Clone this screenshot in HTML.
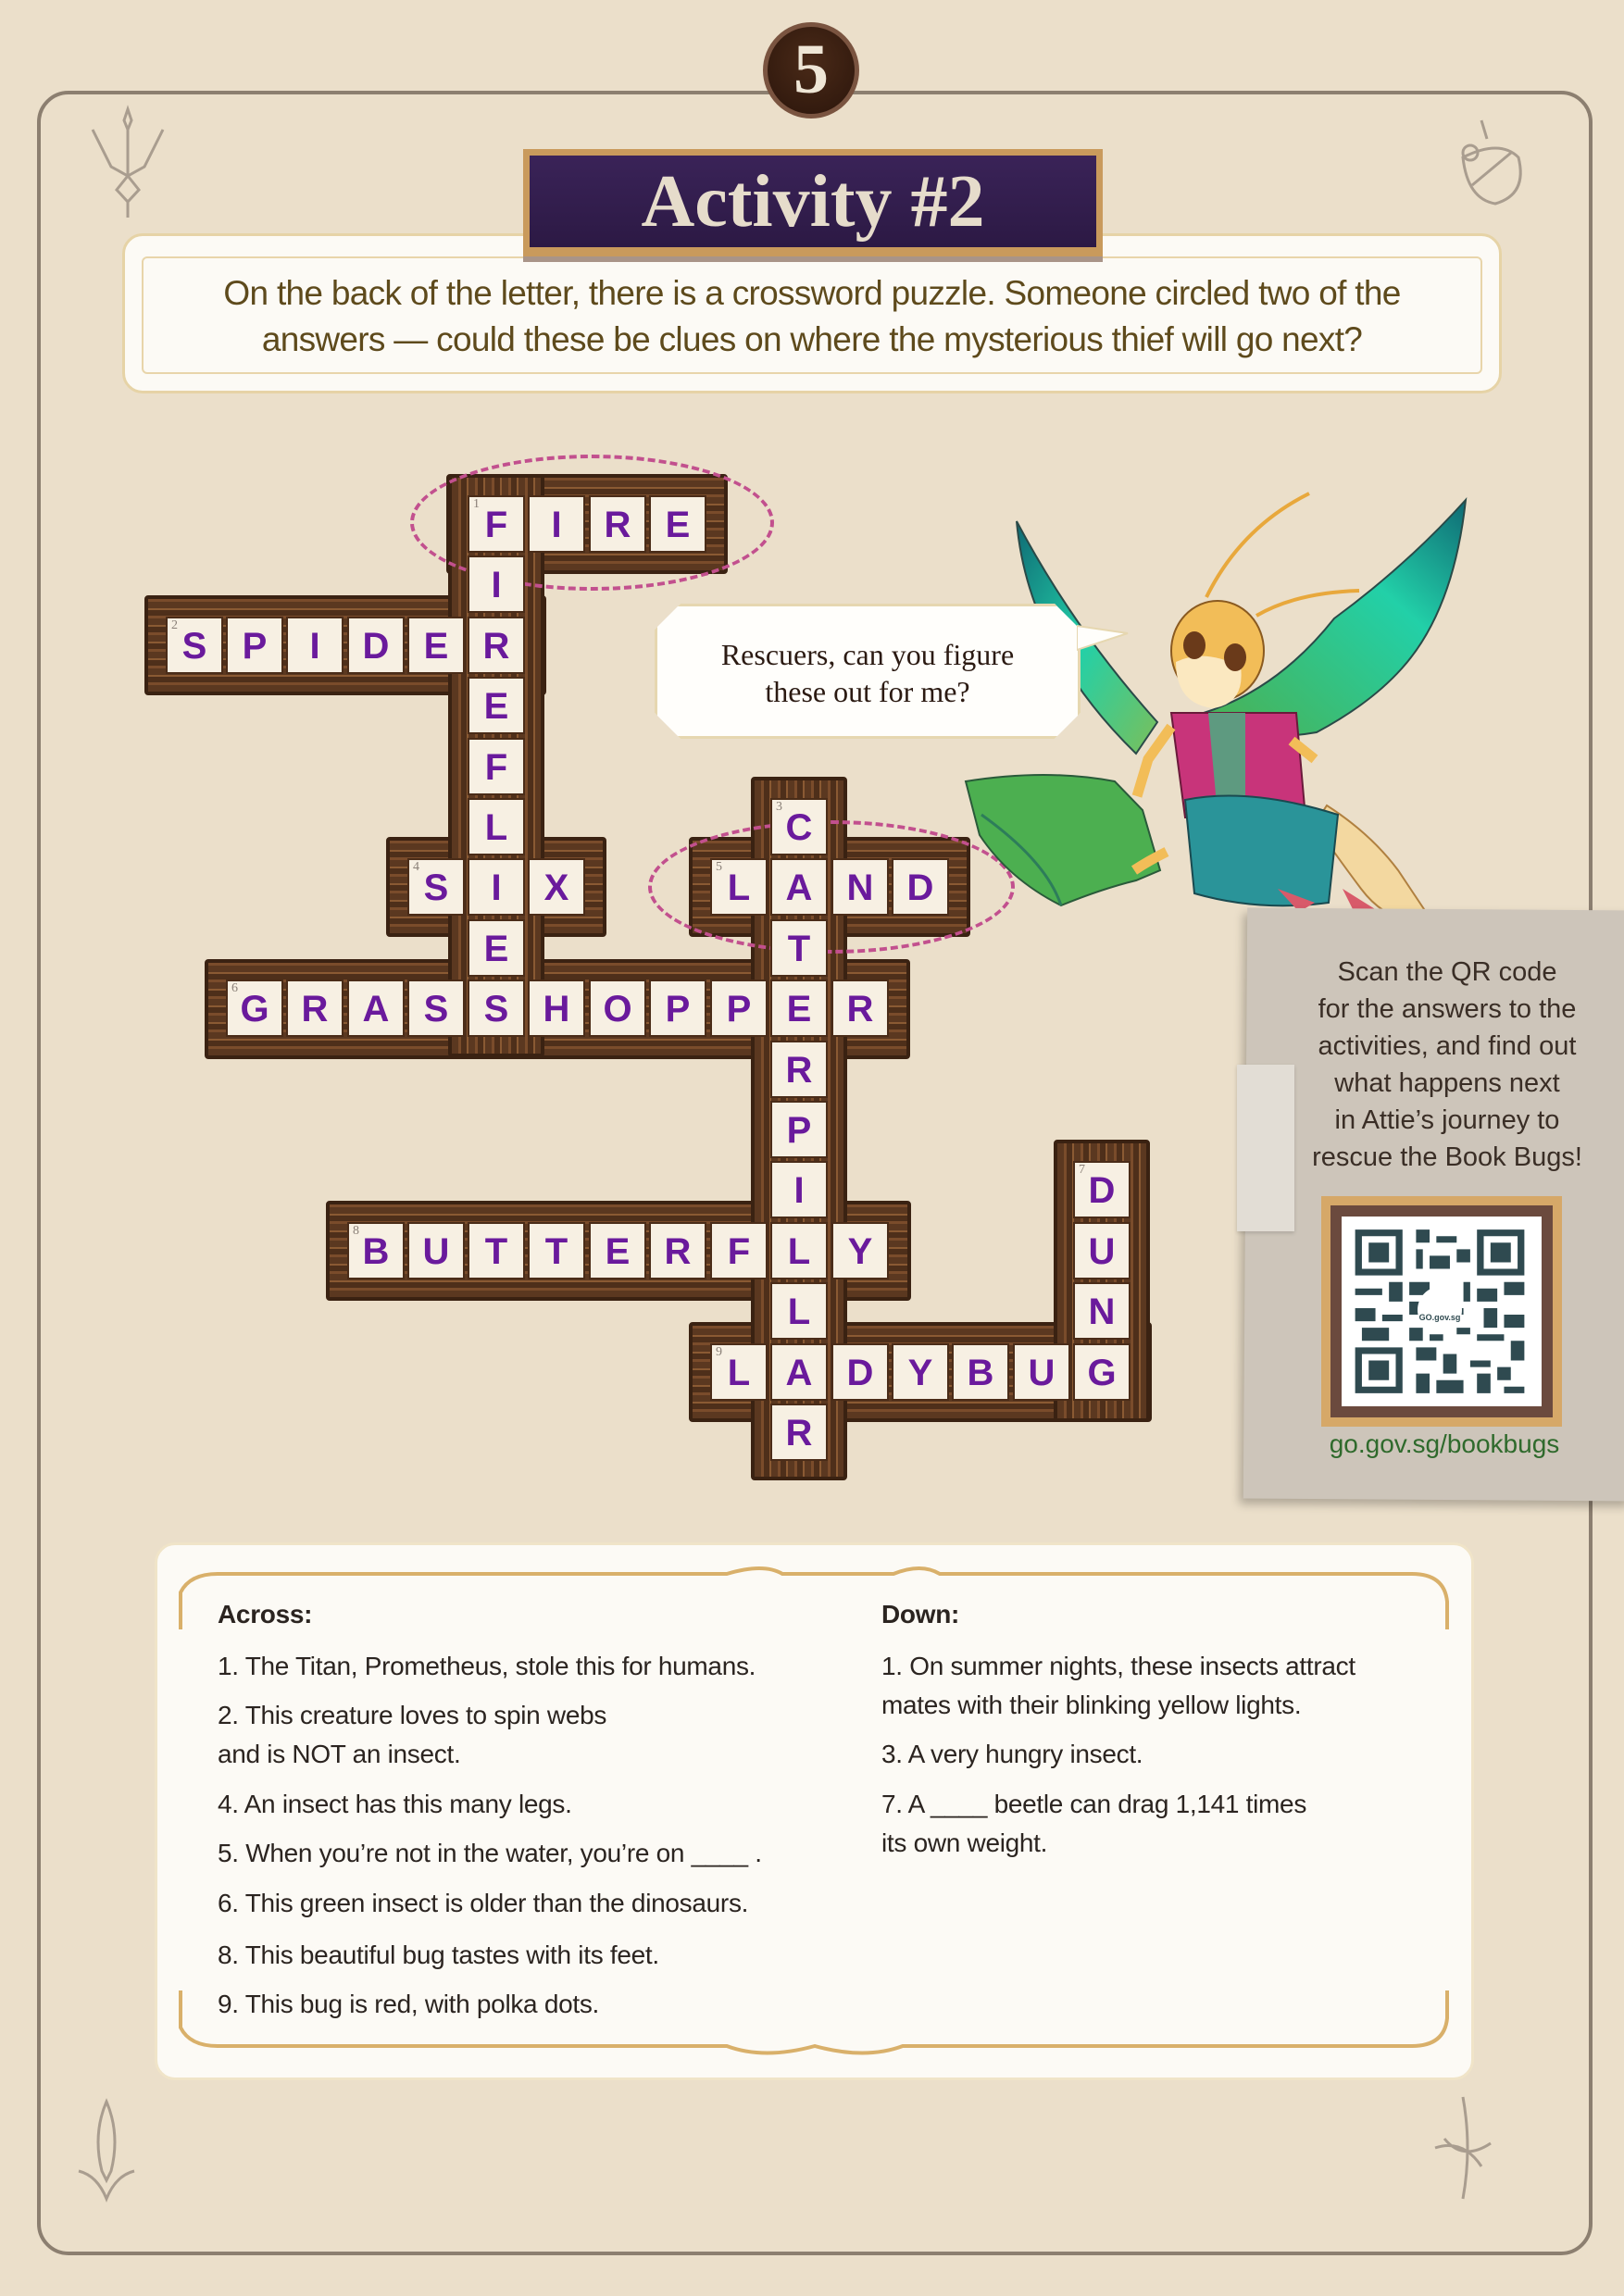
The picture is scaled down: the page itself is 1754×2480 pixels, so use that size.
<!DOCTYPE html>
<html><head><meta charset="utf-8">
<style>
*{margin:0;padding:0;box-sizing:border-box}
body{width:1754px;height:2480px;position:relative;overflow:hidden;background:#ebdfca;font-family:"Liberation Sans",sans-serif}
.abs{position:absolute}
.frame{left:40px;top:98px;width:1680px;height:2338px;border:4px solid #8c7f70;border-radius:34px}
.med{left:824px;top:24px;width:104px;height:104px;border-radius:50%;background:radial-gradient(circle at 50% 40%,#4a2a18,#2b150b);border:5px solid #7a5440;color:#efe6d6;font:bold 76px "Liberation Serif",serif;text-align:center;line-height:92px}
.intro{left:132px;top:252px;width:1490px;height:173px;background:#fcfaf5;border:3px solid #e6d3a6;border-radius:22px}
.intro .in{position:absolute;left:18px;top:22px;right:18px;bottom:18px;border:2px solid #e8d5aa;border-radius:6px}
.introtxt{left:140px;top:292px;width:1474px;text-align:center;color:#5e4a1c;font-size:37px;line-height:50px;letter-spacing:-0.7px}
.banner{left:565px;top:161px;width:626px;height:116px;background:linear-gradient(#3a2358,#2c1944);border:7px solid #c99a5c;border-bottom-width:10px;box-shadow:0 6px 0 #a99488}
.banner span{display:block;text-align:center;color:#e6dccb;font:bold 80px "Liberation Serif",serif;line-height:100px}
.beam{position:absolute;background:repeating-linear-gradient(0deg,#5b3820 0 7px,#7a4c2b 7px 10px,#4e2f1a 10px 16px,#8a5a33 16px 18px);border:4px solid #3a2212;border-radius:4px}
.beam.v{background:repeating-linear-gradient(90deg,#5b3820 0 7px,#7a4c2b 7px 10px,#4e2f1a 10px 16px,#8a5a33 16px 18px)}
.c{position:absolute;width:62px;height:62px;background:#f7f0e3;border:2px solid #4a2c18;color:#6a1a9c;font:bold 40px "Liberation Sans",sans-serif;text-align:center;line-height:60px}
.n{position:absolute;font:14px "Liberation Serif",serif;color:#8a8078}
.ov{position:absolute;border:4px dashed #c2508e;border-radius:50%}
.bub{left:707px;top:652px;width:460px;height:146px;background:#fffefb;border:3px solid #e6d7b0;clip-path:polygon(28px 0,calc(100% - 28px) 0,100% 28px,100% calc(100% - 28px),calc(100% - 28px) 100%,28px 100%,0 calc(100% - 28px),0 28px);text-align:center;font:32px "Liberation Serif",serif;color:#2b1a12;line-height:40px;padding-top:32px}
.qr{left:1345px;top:982px;width:420px;height:638px;background:#cdc5ba;box-shadow:-4px 6px 10px rgba(0,0,0,.25);transform:rotate(0.4deg)}
.qrtxt{left:1380px;top:1030px;width:366px;text-align:center;font-size:29px;line-height:40px;color:#3a2e26}
.clue{left:167px;top:1666px;width:1425px;height:581px;background:#fcfaf5;border:3px solid #f0e4c8;border-radius:22px}
.cl{position:absolute;font-size:28px;color:#2b2420;line-height:42px;letter-spacing:-0.3px}
</style></head><body>
<div class="abs frame"></div>
<svg class="abs" style="left:90px;top:110px" width="100" height="130" viewBox="0 0 100 130"><g fill="none" stroke="#a99d8f" stroke-width="3"><path d="M48 8 L52 20 48 30 44 20Z M48 30 L48 80 M10 30 L30 70 48 80 66 70 86 30 M48 80 L36 95 48 108 60 95Z M48 108 L48 125"/></g></svg>
<svg class="abs" style="left:1560px;top:120px" width="100" height="110" viewBox="0 0 100 110"><g fill="none" stroke="#a99d8f" stroke-width="3"><path d="M40 10 L46 30 M20 50 Q60 30 80 50 Q90 90 55 100 Q25 95 20 50Z M30 80 L72 45"/><circle cx="28" cy="45" r="8"/></g></svg>
<svg class="abs" style="left:80px;top:2265px" width="70" height="120" viewBox="0 0 70 120"><g fill="none" stroke="#a99d8f" stroke-width="3"><path d="M35 5 Q50 40 40 80 L35 90 30 80 Q20 40 35 5Z M5 80 Q25 85 35 110 Q45 85 65 80"/></g></svg>
<svg class="abs" style="left:1540px;top:2260px" width="80" height="120" viewBox="0 0 80 120"><g fill="none" stroke="#a99d8f" stroke-width="3"><path d="M40 5 Q50 60 40 115 M10 60 Q40 50 60 80 M20 50 Q40 75 70 55"/></g></svg>

<div class="abs med">5</div>
<div class="abs intro"><div class="in"></div></div>
<div class="abs introtxt">On the back of the letter, there is a crossword puzzle. Someone circled two of the<br>answers — could these be clues on where the mysterious thief will go next?</div>
<div class="abs banner"><span>Activity #2</span></div>

<div class="beam" style="left:482px;top:512px;width:304px;height:108px"></div>
<div class="beam" style="left:156px;top:643px;width:434px;height:108px"></div>
<div class="beam" style="left:417px;top:904px;width:238px;height:108px"></div>
<div class="beam" style="left:744px;top:904px;width:304px;height:108px"></div>
<div class="beam" style="left:221px;top:1036px;width:762px;height:108px"></div>
<div class="beam" style="left:352px;top:1297px;width:632px;height:108px"></div>
<div class="beam" style="left:744px;top:1428px;width:500px;height:108px"></div>
<div class="beam v" style="left:484px;top:512px;width:104px;height:630px"></div>
<div class="beam v" style="left:811px;top:839px;width:104px;height:760px"></div>
<div class="beam v" style="left:1138px;top:1231px;width:104px;height:305px"></div>

<div class="ov" style="left:443px;top:491px;width:393px;height:147px"></div>
<div class="ov" style="left:700px;top:886px;width:396px;height:144px"></div>

<div class="c" style="left:505px;top:535px">F</div><div class="c" style="left:570px;top:535px">I</div><div class="c" style="left:636px;top:535px">R</div><div class="c" style="left:701px;top:535px">E</div>
<div class="c" style="left:505px;top:600px">I</div>
<div class="c" style="left:179px;top:666px">S</div><div class="c" style="left:244px;top:666px">P</div><div class="c" style="left:309px;top:666px">I</div><div class="c" style="left:375px;top:666px">D</div><div class="c" style="left:440px;top:666px">E</div><div class="c" style="left:505px;top:666px">R</div>
<div class="c" style="left:505px;top:731px">E</div>
<div class="c" style="left:505px;top:797px">F</div>
<div class="c" style="left:505px;top:862px">L</div><div class="c" style="left:832px;top:862px">C</div>
<div class="c" style="left:440px;top:927px">S</div><div class="c" style="left:505px;top:927px">I</div><div class="c" style="left:570px;top:927px">X</div><div class="c" style="left:767px;top:927px">L</div><div class="c" style="left:832px;top:927px">A</div><div class="c" style="left:898px;top:927px">N</div><div class="c" style="left:963px;top:927px">D</div>
<div class="c" style="left:505px;top:993px">E</div><div class="c" style="left:832px;top:993px">T</div>
<div class="c" style="left:244px;top:1058px">G</div><div class="c" style="left:309px;top:1058px">R</div><div class="c" style="left:375px;top:1058px">A</div><div class="c" style="left:440px;top:1058px">S</div><div class="c" style="left:505px;top:1058px">S</div><div class="c" style="left:570px;top:1058px">H</div><div class="c" style="left:636px;top:1058px">O</div><div class="c" style="left:701px;top:1058px">P</div><div class="c" style="left:767px;top:1058px">P</div><div class="c" style="left:832px;top:1058px">E</div><div class="c" style="left:898px;top:1058px">R</div>
<div class="c" style="left:832px;top:1124px">R</div>
<div class="c" style="left:832px;top:1189px">P</div>
<div class="c" style="left:832px;top:1254px">I</div><div class="c" style="left:1159px;top:1254px">D</div>
<div class="c" style="left:375px;top:1320px">B</div><div class="c" style="left:440px;top:1320px">U</div><div class="c" style="left:505px;top:1320px">T</div><div class="c" style="left:570px;top:1320px">T</div><div class="c" style="left:636px;top:1320px">E</div><div class="c" style="left:701px;top:1320px">R</div><div class="c" style="left:767px;top:1320px">F</div><div class="c" style="left:832px;top:1320px">L</div><div class="c" style="left:898px;top:1320px">Y</div><div class="c" style="left:1159px;top:1320px">U</div>
<div class="c" style="left:832px;top:1385px">L</div><div class="c" style="left:1159px;top:1385px">N</div>
<div class="c" style="left:767px;top:1451px">L</div><div class="c" style="left:832px;top:1451px">A</div><div class="c" style="left:898px;top:1451px">D</div><div class="c" style="left:963px;top:1451px">Y</div><div class="c" style="left:1028px;top:1451px">B</div><div class="c" style="left:1094px;top:1451px">U</div><div class="c" style="left:1159px;top:1451px">G</div>
<div class="c" style="left:832px;top:1516px">R</div>
<div class="n" style="left:511px;top:537px">1</div><div class="n" style="left:185px;top:668px">2</div><div class="n" style="left:838px;top:864px">3</div><div class="n" style="left:446px;top:929px">4</div><div class="n" style="left:773px;top:929px">5</div><div class="n" style="left:250px;top:1060px">6</div><div class="n" style="left:1165px;top:1256px">7</div><div class="n" style="left:381px;top:1322px">8</div><div class="n" style="left:773px;top:1453px">9</div>

<!-- character -->
<svg class="abs" style="left:1030px;top:520px" width="570" height="490" viewBox="1030 520 570 490">
<defs><linearGradient id="w" x1="0" y1="0" x2="1" y2="1"><stop offset="0" stop-color="#0f6a74"/><stop offset=".5" stop-color="#22d0a8"/><stop offset="1" stop-color="#7bbf5a"/></linearGradient>
<linearGradient id="w2" x1="1" y1="0" x2="0" y2="1"><stop offset="0" stop-color="#0f6a74"/><stop offset=".35" stop-color="#22d0a8"/><stop offset="1" stop-color="#4caf50"/></linearGradient></defs>
<path d="M1098 563 Q1110 700 1227 814 L1250 780 Q1160 680 1098 563Z" fill="url(#w)" stroke="#2a4a48" stroke-width="2"/>
<path d="M1583 540 Q1570 660 1514 722 Q1480 760 1422 791 Q1370 800 1318 791 L1300 770 Q1380 745 1441 668 Q1520 610 1583 540Z" fill="url(#w2)" stroke="#2a4a48" stroke-width="2"/>
<path d="M1043 844 Q1130 830 1204 844 L1234 875 L1253 940 L1227 951 Q1190 960 1146 978 Q1090 950 1058 902Z" fill="#4caf50" stroke="#2a5a3a" stroke-width="2"/>
<path d="M1060 880 Q1130 930 1146 978" stroke="#2d7d5a" stroke-width="3" fill="none"/>
<path d="M1303 645 Q1340 570 1414 533" stroke="#e8a83c" stroke-width="4" fill="none"/>
<path d="M1357 665 Q1400 640 1468 638" stroke="#e8a83c" stroke-width="4" fill="none"/>
<path d="M1433 870 Q1480 900 1510 940 L1548 997 Q1500 1000 1470 960 Q1440 920 1420 890Z" fill="#f3d8a0" stroke="#b08040" stroke-width="2"/>
<path d="M1265 770 L1400 770 L1410 883 L1280 883Z" fill="#c8347a" stroke="#6a1a3a" stroke-width="2"/>
<path d="M1305 770 L1345 770 L1345 880 L1315 880Z" fill="#5e9a80"/>
<path d="M1280 864 Q1350 850 1445 880 L1435 975 Q1360 985 1290 965Z" fill="#2a9499" stroke="#1a4a50" stroke-width="2"/>
<path d="M1380 960 L1420 975 L1403 985Z M1450 960 L1490 985 L1465 990Z" fill="#d85a6a"/>
<ellipse cx="1315" cy="703" rx="50" ry="54" fill="#f2bd58" stroke="#8a5a20" stroke-width="2"/>
<path d="M1270 715 Q1300 700 1340 720 Q1345 760 1310 765 Q1270 760 1270 715Z" fill="#fbe8c0"/>
<ellipse cx="1290" cy="697" rx="12" ry="15" fill="#6a3a1a"/><ellipse cx="1334" cy="710" rx="12" ry="15" fill="#6a3a1a"/>
<path d="M1265 785 L1240 820 L1228 860 M1395 800 L1420 820" stroke="#f2bd58" stroke-width="11" fill="none"/>
<path d="M1260 920 Q1240 930 1225 940" stroke="#f2bd58" stroke-width="11"/>
</svg>
<div class="abs bub">Rescuers, can you figure<br>these out for me?</div>
<svg class="abs" style="left:1163px;top:668px" width="60" height="40"><path d="M0 8 L55 16 L0 34Z" fill="#fffefb" stroke="#e6d7b0" stroke-width="2"/></svg>

<div class="abs qr"></div>
<div class="abs" style="left:1336px;top:1150px;width:62px;height:180px;background:#e2ddd5;box-shadow:0 2px 4px rgba(0,0,0,.15)"></div>
<div class="abs qrtxt">Scan the QR code<br>for the answers to the<br>activities, and find out<br>what happens next<br>in Attie’s journey to<br>rescue the Book Bugs!</div>
<div class="abs" style="left:1427px;top:1292px;width:260px;height:249px;background:#d6a868;padding:10px"><div style="width:100%;height:100%;background:#6b4a3e;padding:12px"><div style="width:100%;height:100%;background:#fff;position:relative">
<svg width="212" height="205" viewBox="0 0 29 29" style="position:absolute;left:0;top:0" preserveAspectRatio="none"><g fill="#2f4a50">
<path d="M2 2h7v7h-7zM3 3v5h5v-5zM4 4h3v3h-3z M20 2h7v7h-7zM21 3v5h5v-5zM22 4h3v3h-3z M2 20h7v7h-7zM3 21v5h5v-5zM4 22h3v3h-3z" fill-rule="evenodd"/>
<path d="M11 2h2v2h-2zM14 3h3v1h-3zM11 5h1v3h-1zM13 6h3v2h-3zM17 5h2v2h-2zM10 10h3v2h-3zM2 11h4v1h-4zM7 10h2v3h-2zM2 14h3v2h-3zM6 15h3v1h-3zM3 17h4v2h-4zM20 11h3v2h-3zM24 10h3v2h-3zM21 14h2v3h-2zM24 15h3v2h-3zM20 18h4v1h-4zM25 19h2v3h-2zM11 20h3v2h-3zM15 21h2v3h-2zM11 24h2v3h-2zM14 25h4v2h-4zM19 22h3v1h-3zM20 24h2v3h-2zM23 23h2v2h-2zM24 26h3v1h-3zM18 10h1v3h-1zM10 17h2v2h-2zM17 17h2v1h-2zM10 13h2v2h-2zM16 14h2v1h-2zM13 18h2v1h-2z"/></g></svg>
<div style="position:absolute;left:82px;top:76px;width:48px;height:50px;background:#fff;border-radius:50%;font:bold 9px 'Liberation Sans';color:#2f4a50;text-align:center;padding-top:28px">GO.gov.sg</div>
</div></div></div>
<div class="abs" style="left:1345px;top:1544px;width:430px;text-align:center;font-size:28px;color:#2f6a2c">go.gov.sg/bookbugs</div>

<div class="abs clue"></div>
<svg class="abs" style="left:185px;top:1680px" width="1390" height="560" viewBox="0 0 1390 560"><g fill="none" stroke="#d9b06a" stroke-width="4"><path d="M10 80 V40 Q20 20 50 20 H600 Q640 8 660 20 H780 Q810 8 830 20 H1340 Q1375 20 1378 50 V80"/><path d="M10 470 V510 Q20 530 50 530 H600 Q640 545 695 530 Q750 545 790 530 H1340 Q1375 530 1378 500 V470"/></g></svg>
<div class="cl" style="left:235px;top:1723px;font-weight:bold">Across:</div>
<div class="cl" style="left:235px;top:1779px">1. The Titan, Prometheus, stole this for humans.</div>
<div class="cl" style="left:235px;top:1832px">2. This creature loves to spin webs</div>
<div class="cl" style="left:235px;top:1874px">and is NOT an insect.</div>
<div class="cl" style="left:235px;top:1928px">4. An insect has this many legs.</div>
<div class="cl" style="left:235px;top:1981px">5. When you’re not in the water, you’re on ____ .</div>
<div class="cl" style="left:235px;top:2035px">6. This green insect is older than the dinosaurs.</div>
<div class="cl" style="left:235px;top:2091px">8. This beautiful bug tastes with its feet.</div>
<div class="cl" style="left:235px;top:2144px">9. This bug is red, with polka dots.</div>
<div class="cl" style="left:952px;top:1723px;font-weight:bold">Down:</div>
<div class="cl" style="left:952px;top:1779px">1. On summer nights, these insects attract</div>
<div class="cl" style="left:952px;top:1821px">mates with their blinking yellow lights.</div>
<div class="cl" style="left:952px;top:1874px">3. A very hungry insect.</div>
<div class="cl" style="left:952px;top:1928px">7. A ____ beetle can drag 1,141 times</div>
<div class="cl" style="left:952px;top:1970px">its own weight.</div>
</body></html>
